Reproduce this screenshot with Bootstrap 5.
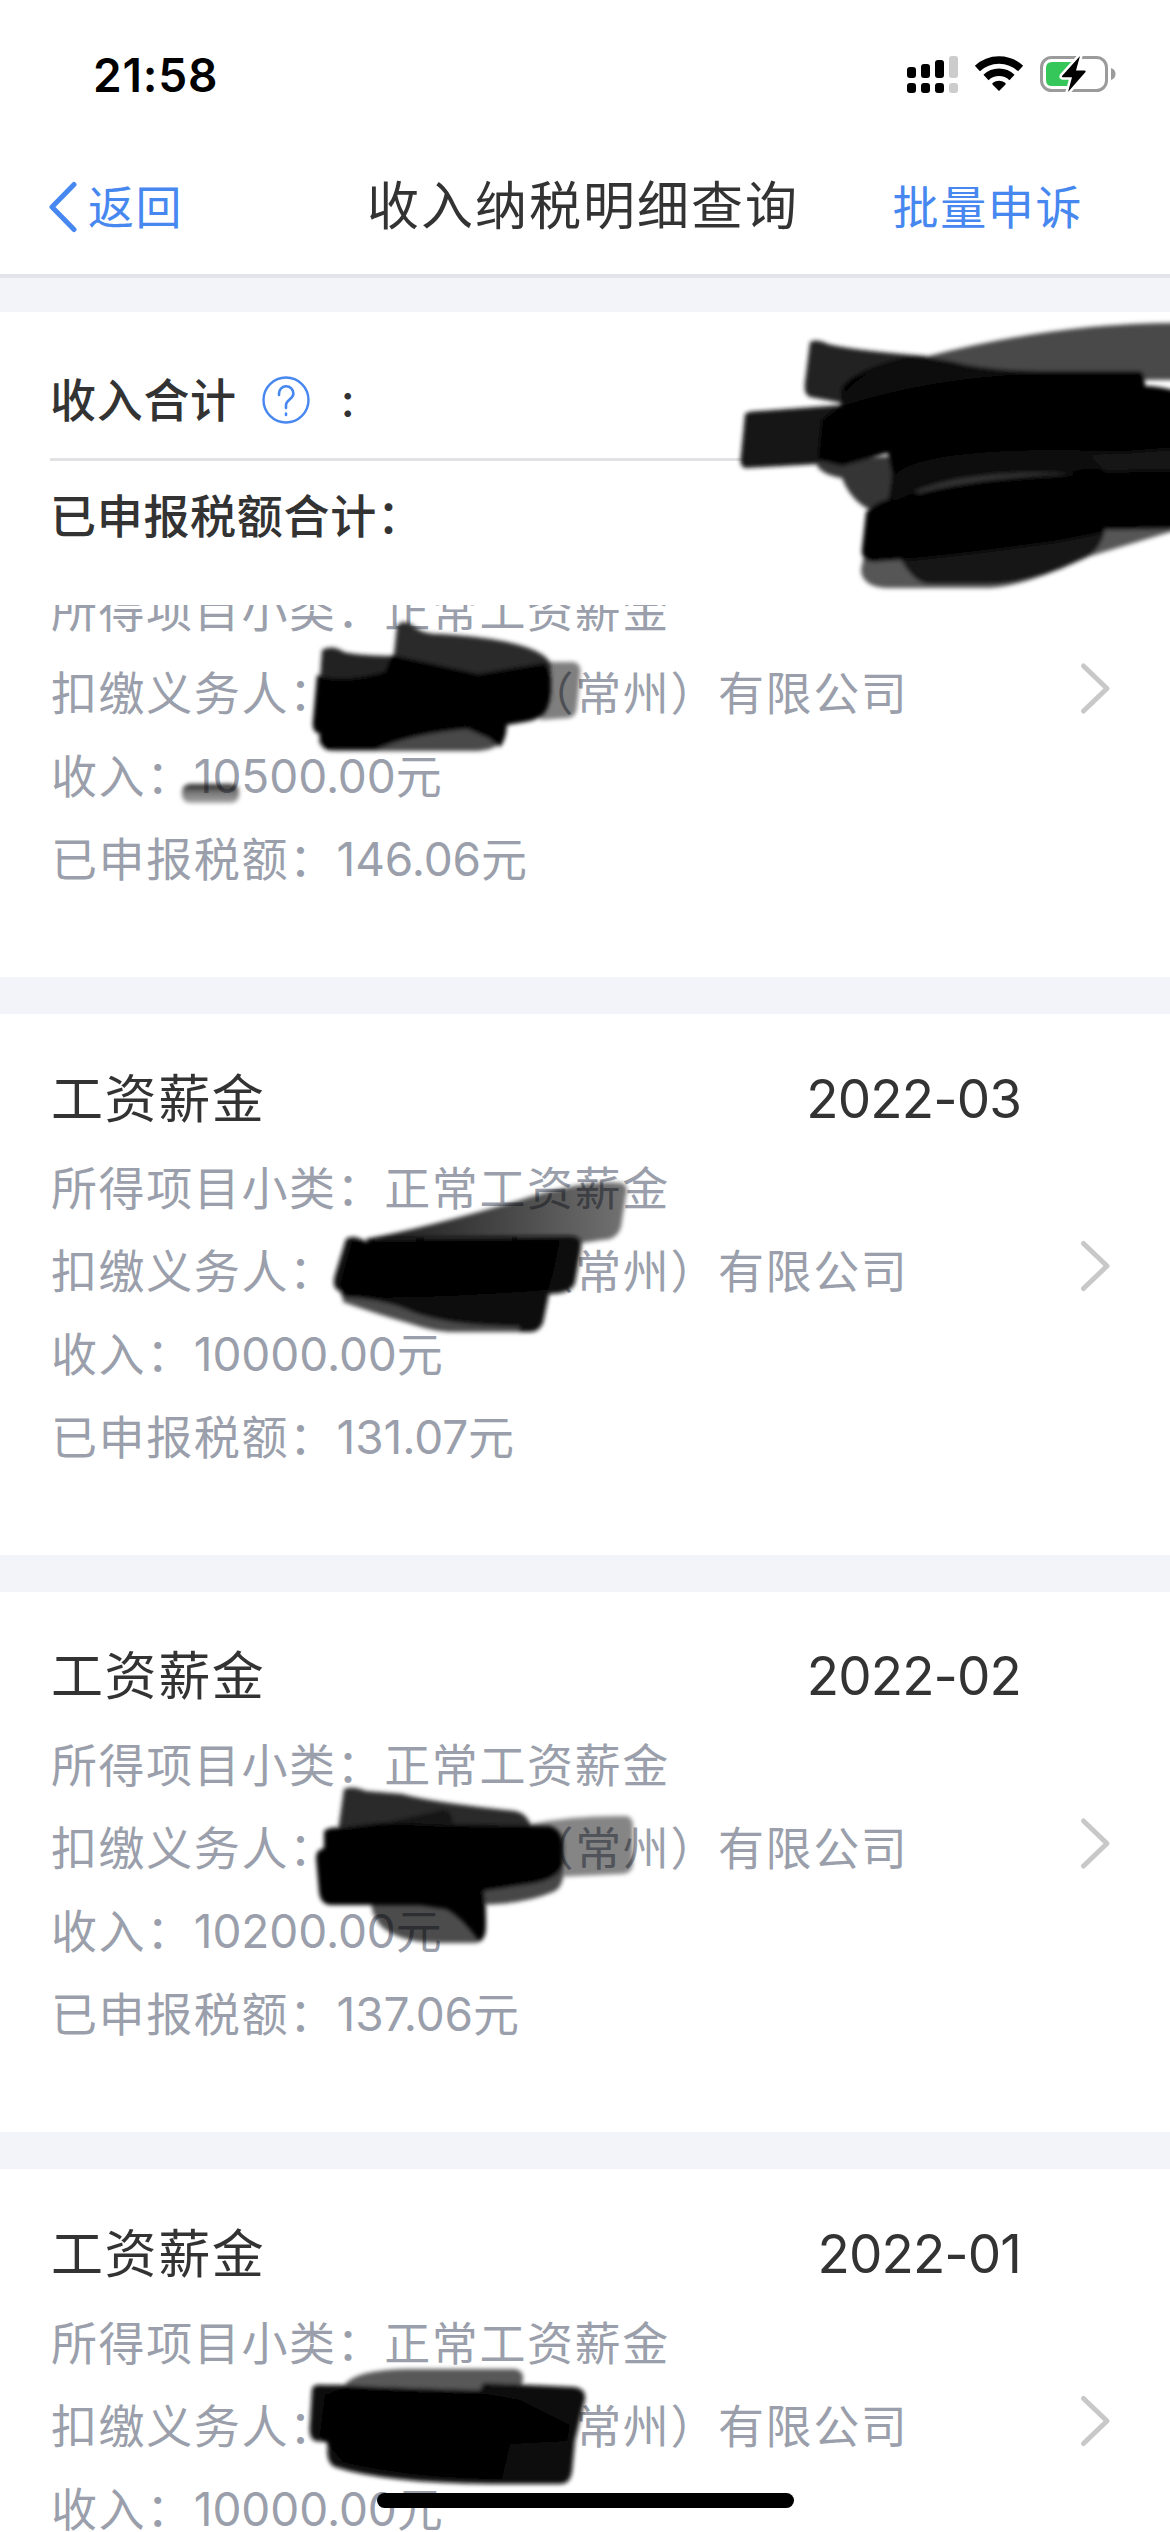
<!DOCTYPE html>
<html lang="zh-CN">
<head>
<meta charset="utf-8">
<meta name="viewport" content="width=device-width, initial-scale=1">
<title>收入纳税明细查询</title>
<link href="https://cdn.jsdelivr.net/npm/bootstrap@5.3.0/dist/css/bootstrap.min.css" rel="stylesheet">
<style>
  body { font-family: Inter, "Noto Sans CJK SC", sans-serif; color: #333; background: #fff; letter-spacing: 1.6px; }
  .screen { width: 1170px; height: 2532px; }
  .status-bar { height: 150px; padding: 45px 54px 0 93px; }
  .status-icons { margin-top: 9px; }
  .clock { font-size: 46px; line-height: 60px; font-weight: 600; color: #000; letter-spacing: .8px; }
  .title-bar { height: 128px; border-bottom: 4px solid #e2e4e9; padding: 0 87px 11px 48px; }
  .nav-action { color: #4787f0; font-size: 46px; line-height: 60px; text-decoration: none; }
  .page-title { font-size: 52px; line-height: 60px; font-weight: 400; margin: 0; padding-left: 90px; letter-spacing: 2px; }
  .band { height: 34px; background: #f2f4f9; }
  .totals { height: 293px; padding-left: 50px; }
  .totals-row { font-size: 46px; letter-spacing: .7px; font-weight: 500; line-height: 60px; }
  .totals-first { height: 149px; border-bottom: 3px solid #e2e2e5; padding-top: 29px; }
  .totals-second { height: 110px; }
  .help { margin: 0 30px 0 24px; }
  .record { height: 540.5px; padding: 44px 61px 0 51px; }
  .record-partial { margin-top: -168.5px; }
  .list-gap { height: 37px; background: #f2f4f9; }
  .record-head { height: 80px; padding-top: 3px; margin-bottom: 8.5px; font-size: 52px; padding-right: 88px; }
  .record-date { letter-spacing: -.9px; font-size: 53px; }
  .record-line { height: 83px; line-height: 83px; font-size: 46px; color: #9a9fab; white-space: nowrap; }
  .amount { letter-spacing: -.1px; }
  .masked { display: inline-block; width: 191px; }
  .ink { left: 0; top: 0; pointer-events: none; }
  .home-bar { left: 377px; top: 2493px; width: 417px; height: 15px; border-radius: 8px; background: #000; }
</style>
</head>
<body>
<div class="screen position-relative overflow-hidden d-flex flex-column">
  <header class="status-bar d-flex justify-content-between flex-shrink-0">
    <span class="clock">21:58</span>
    <svg class="status-icons" width="210" height="40" viewBox="906 54 210 40" aria-hidden="true">
      <g fill="#000">
        <rect x="907" y="67" width="9" height="11" rx="3"/><rect x="921" y="64" width="9" height="14" rx="3"/><rect x="935" y="60" width="9" height="18" rx="3"/>
        <rect x="907" y="83" width="9" height="10" rx="3"/><rect x="921" y="83" width="9" height="10" rx="3"/><rect x="935" y="83" width="9" height="10" rx="3"/>
      </g>
      <g fill="#ccc"><rect x="949" y="56" width="9" height="22" rx="3"/><rect x="949" y="83" width="9" height="10" rx="3"/></g>
      <g fill="none" stroke="#000" stroke-width="7.4"><path d="M977.400 68.500a31.500 31.500 0 0 1 43.200 0"/><path d="M986 77.500a18.800 18.800 0 0 1 26 0"/></g>
      <path d="M999 91l-6.500-6.500q-.6-1 .4-1.700a10 10 0 0 1 12.200 0q1 .7.4 1.700z"/>
      <rect x="1041.500" y="57.500" width="65" height="33" rx="10" fill="none" stroke="#9b9b9b" stroke-width="3"/>
      <path d="M1111 68q4.500 1.500 4.500 6t-4.500 6z" fill="#9b9b9b"/>
      <path d="M1052 62h20v24h-20q-6 0-6-6V68q0-6 6-6z" fill="#35c759"/>
      <path d="M1080 56l-18 20q-.6 1.200.8 1.300h9.200L1068 92l17.500-20q.8-1.400-.8-1.500H1076z" fill="#000" stroke="#fff" stroke-width="5" stroke-linejoin="round" paint-order="stroke"/>
    </svg>
  </header>

  <nav class="title-bar d-flex align-items-center justify-content-between flex-shrink-0">
    <a class="nav-action d-flex align-items-center" href="#">
      <svg width="40" height="52" viewBox="0 0 40 52" fill="none" stroke="#4787f0" stroke-width="5" stroke-linecap="round" stroke-linejoin="round"><path d="M26 3.500L4 26l22 22.500"/></svg>返回
    </a>
    <h1 class="page-title">收入纳税明细查询</h1>
    <a class="nav-action" href="#">批量申诉</a>
  </nav>
  <div class="band flex-shrink-0"></div>

  <section class="totals flex-shrink-0">
    <div class="totals-row totals-first d-flex align-items-center">
      <span>收入合计</span>
      <svg class="help" width="50" height="50" viewBox="0 0 50 50" fill="none" stroke="#4787f0"><circle cx="25" cy="25" r="22.500" stroke-width="2.400"/><path d="M18 20v-1.500a7.200 7.200 0 0 1 14.400 0c0 5.500-7.400 6.500-7.400 11.500v3M25 38.500v1.500" stroke-width="2.600" stroke-linecap="round"/></svg>
      <span>:</span>
    </div>
    <div class="totals-row totals-second d-flex align-items-center"><span>已申报税额合计：</span></div>
  </section>

  <main class="flex-grow-1 overflow-hidden">
    <article class="record record-partial">
      <div class="record-head"></div>
      <div class="record-line">所得项目小类：正常工资薪金</div>
      <div class="record-line">扣缴义务人：<span class="masked"></span>（常州）有限公司</div>
      <div class="record-line">收入：<span class="amount">10500.00</span>元</div>
      <div class="record-line">已申报税额：<span class="amount">146.06</span>元</div>
    </article>
    <div class="list-gap"></div>
    <article class="record">
      <div class="record-head d-flex align-items-center justify-content-between"><span>工资薪金</span><span class="record-date">2022-03</span></div>
      <div class="record-line">所得项目小类：正常工资薪金</div>
      <div class="record-line">扣缴义务人：<span class="masked"></span>（常州）有限公司</div>
      <div class="record-line">收入：<span class="amount">10000.00</span>元</div>
      <div class="record-line">已申报税额：<span class="amount">131.07</span>元</div>
    </article>
    <div class="list-gap"></div>
    <article class="record">
      <div class="record-head d-flex align-items-center justify-content-between"><span>工资薪金</span><span class="record-date">2022-02</span></div>
      <div class="record-line">所得项目小类：正常工资薪金</div>
      <div class="record-line">扣缴义务人：<span class="masked"></span>（常州）有限公司</div>
      <div class="record-line">收入：<span class="amount">10200.00</span>元</div>
      <div class="record-line">已申报税额：<span class="amount">137.06</span>元</div>
    </article>
    <div class="list-gap"></div>
    <article class="record">
      <div class="record-head d-flex align-items-center justify-content-between"><span>工资薪金</span><span class="record-date">2022-01</span></div>
      <div class="record-line">所得项目小类：正常工资薪金</div>
      <div class="record-line">扣缴义务人：<span class="masked"></span>（常州）有限公司</div>
      <div class="record-line">收入：<span class="amount">10000.00</span>元</div>
    </article>
  </main>

  <!-- marker strokes drawn over the page -->
  <svg class="ink position-absolute" width="1170" height="2532" viewBox="0 0 1170 2532" aria-hidden="true">
    <defs>
      <filter id="soft" x="-5%" y="-5%" width="110%" height="110%"><feGaussianBlur stdDeviation="2"/></filter>
      <linearGradient id="dash" x1="0" y1="0" x2="0" y2="1"><stop offset="0" stop-opacity=".9"/><stop offset=".4" stop-opacity=".55"/><stop offset="1" stop-opacity=".35"/></linearGradient>
      <linearGradient id="sweep" x1="0" y1="0" x2="1" y2="0"><stop offset="0" stop-opacity=".9"/><stop offset=".6" stop-opacity=".7"/><stop offset="1" stop-opacity=".55"/></linearGradient>
    </defs>
    <g filter="url(#soft)">
      <path fill="#484848" d="M925 357Q1060 322 1180 323V380H1140L960 376z"/>
      <path fill="#222" d="M810 342Q816 338 828 344Q850 350 925 356L980 372 860 410 842 403 810 397Q803 394 805 382z"/>
      <path fill="#161616" d="M745 414Q748 411 760 411L842 405 870 460 818 464 745 468Q739 466 741 455z"/>
      <path fill="#343434" d="M816 462Q818 474 842 478Q850 499 868 509L910 502 905 455z"/>
      <path fill="#565656" d="M866 545L861 570Q862 586 885 588H990Q1025 586 1087 557L1180 529V500z"/>
      <path d="M842 388Q850 372 905 358Q925 355 967 365Q1000 371 1040 371H1140Q1145 372 1145 386Q1160 386 1180 392V529L1105 530Q1100 553 1080 560Q1030 584 985 584H930Q915 584 901 560L872 562Q860 560 862 548L866 512Q880 500 889 499L892 475 888 453 842 466 818 460 822 420 841 405z"/>
      <path fill="#151515" d="M902 560Q960 555 1060 541L1104 532Q1098 552 1075 562Q1030 580 990 583H930Q915 583 902 560z"/>
      <path fill="#0e0e0e" d="M846 392Q870 362 925 359Q970 366 1030 374Q930 378 842 406z"/>
      <path fill="#0b0b0b" d="M893 478Q910 449 1070 450L1180 454V472Q1120 466 1060 471Q970 474 915 492L893 502z"/>
      <path fill="#151515" d="M1090 455L1180 448V470L1105 472z"/>
      <path fill="#343434" d="M913 492Q970 468 1080 474Q980 477 920 493z"/>

      <path fill-opacity=".5" d="M548 662L574 662Q582 664 580 676L577 707Q576 718 568 718L540 720z"/>
      <path fill="#2b2b2b" d="M397 626Q404 617 416 628Q424 634 440 634Q540 640 551 664V700L390 690z"/>
      <path fill="#484848" d="M321 726L319 742Q323 751 334 751H478Q500 749 503 738L507 720z"/>
      <path fill="#232323" d="M322 650Q332 644 344 652Q360 656 400 656L430 720H317z"/>
      <path d="M317 675Q340 684 385 672L392 655 478 674 545 663Q554 674 549 703Q546 719 525 722L507 725Q506 740 500 747L488 738 467 729Q410 734 375 750H327Q318 744 320 734Q311 732 313 720z"/>
      <rect x="182" y="784" width="57" height="19" rx="8" fill="url(#dash)"/>

      <path fill="url(#sweep)" d="M365 1239Q425 1228 520 1200 585 1179 622 1183Q629 1186 626 1195L621 1227Q617 1240 602 1240L575 1244 395 1260z"/>
      <path fill="#111" d="M346 1239Q354 1234 366 1242Q374 1237 390 1238L572 1236Q583 1237 581 1249L575 1283Q571 1294 549 1294L543 1323Q539 1332 530 1332H455Q430 1332 399 1319L350 1303Q342 1302 341 1292 331 1289 335 1275z"/>
      <path fill="#4b4b4b" d="M343 1297Q380 1299 405 1309 440 1326 520 1327L518 1332H455Q425 1331 343 1302z"/>
      <path d="M352 1242L560 1240 554 1270 548 1290Q420 1300 348 1297L340 1285z"/>

      <path fill-opacity=".48" d="M530 1824Q575 1815 627 1816Q634 1818 633 1829V1862Q633 1874 621 1874L555 1877z"/>
      <path fill="#292929" d="M344 1789Q352 1785 366 1791L402 1794Q430 1802 515 1811Q529 1814 532 1830L525 1845H336z"/>
      <path fill-opacity=".7" d="M370 1890Q370 1920 386 1930Q405 1943 440 1943H475Q486 1942 486 1928L486 1880z"/>
      <path fill="#474747" d="M563 1866Q565 1887 553 1892Q525 1904 480 1905V1870z"/>
      <path d="M324 1831Q330 1826 340 1828L380 1823 550 1826Q563 1830 563 1846V1865Q558 1880 530 1884L484 1891 486 1921Q486 1939 479 1941Q463 1918 447 1909L420 1905H330Q320 1904 319 1892L316 1858Q316 1850 324 1848z"/>
      <path fill="#181818" d="M385 1823L437 1811Q451 1806 453 1823z"/>

      <path fill="#595959" d="M344 2385Q356 2370 405 2369H515Q524 2371 523 2379L520 2393H350z"/>
      <path fill="#0c0c0c" d="M312 2389Q313 2384 324 2385H345Q365 2387 480 2390L483 2383 573 2387Q586 2388 585 2399L575 2441 572 2472Q570 2484 561 2484H491Q385 2483 335 2467Q325 2463 328 2442L315 2441Q308 2438 310 2423z"/>
      <path d="M350 2386L480 2393 520 2400 570 2425 567 2441 510 2444 502 2479Q410 2478 343 2462L320 2435 325 2395z"/>
    </g>
    <g fill="none" stroke="#c8c8c8" stroke-width="5" stroke-linecap="round" stroke-linejoin="round">
      <path d="M1083.500 666L1107 688.500 1083.500 711"/>
      <path d="M1083.500 1243.500L1107 1266 1083.500 1288.500"/>
      <path d="M1083.500 1821L1107 1843.500 1083.500 1866"/>
      <path d="M1083.500 2398.500L1107 2421 1083.500 2443.500"/>
    </g>
  </svg>
  <div class="home-bar position-absolute"></div>
</div>
<script src="https://cdn.jsdelivr.net/npm/bootstrap@5.3.0/dist/js/bootstrap.bundle.min.js"></script>
</body>
</html>
